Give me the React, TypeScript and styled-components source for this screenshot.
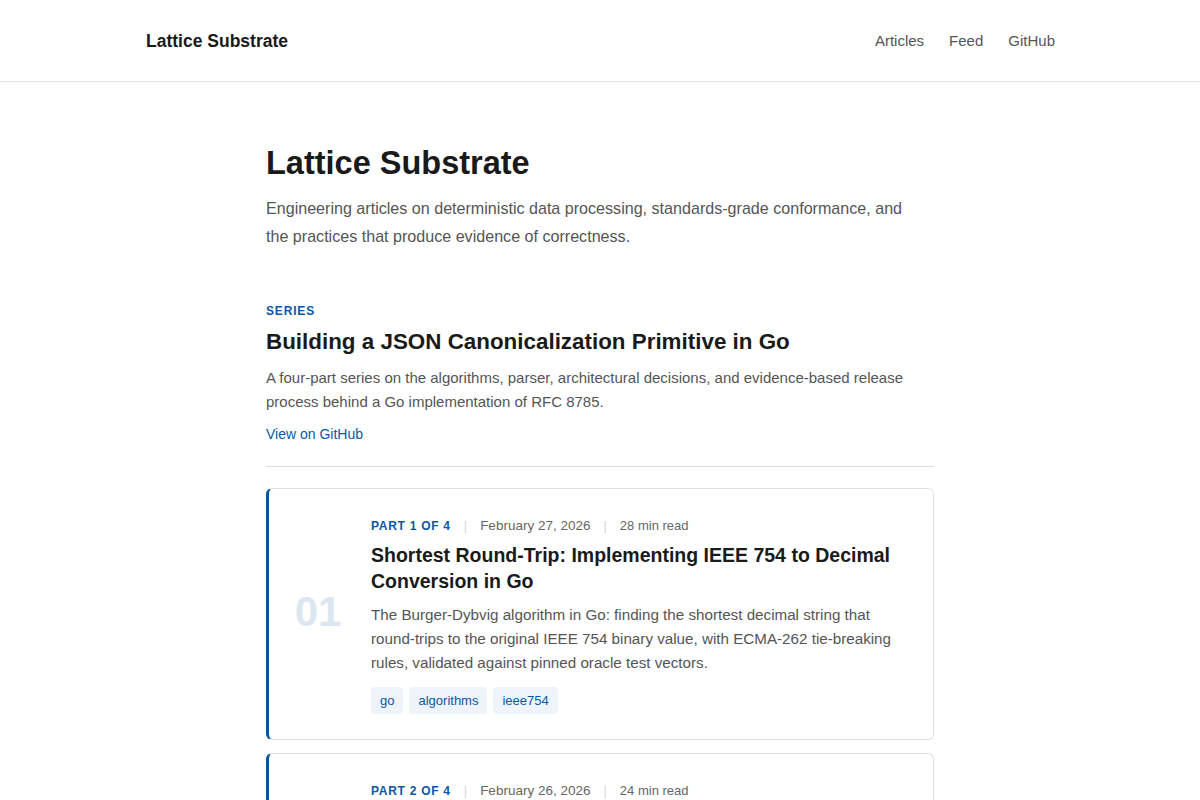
import styled, { createGlobalStyle } from "styled-components"

const GlobalStyle = createGlobalStyle`
  body {
    margin: 0;
    background: #ffffff;
    font-family: "Liberation Sans", Arial, sans-serif;
    color: #1a1a1a;
  }
  * {
    box-sizing: border-box;
  }
`

const Header = styled.header`
  border-bottom: 1px solid #e2e2e2;
`

const HeaderInner = styled.div`
  display: flex;
  align-items: center;
  justify-content: space-between;
  height: 81px;
  margin: 0 auto;
  padding: 0 145px 0 146px;
`

const Brand = styled.a`
  padding-top: 2px;
  font-size: 17.5px;
  font-weight: 700;
  color: #1a1a1a;
  text-decoration: none;
`

const Nav = styled.nav`
  display: flex;
  gap: 25px;
`

const NavLink = styled.a`
  font-size: 15px;
  color: #555555;
  text-decoration: none;
`

const Main = styled.main`
  width: 668px;
  margin: 0 auto;
  padding-top: 61px;
`

const Title = styled.h1`
  margin: 0;
  font-size: 32.5px;
  line-height: 40px;
  font-weight: 700;
  color: #1a1a1a;
`

const Lead = styled.p`
  max-width: 640px;
  margin: 11px 0 0;
  font-size: 16.1px;
  line-height: 28px;
  color: #555555;
`

const Series = styled.section`
  margin-top: 53px;
  padding-bottom: 22px;
  border-bottom: 1px solid #dddddd;
`

const Eyebrow = styled.div`
  font-size: 12px;
  line-height: 16px;
  font-weight: 700;
  letter-spacing: 0.07em;
  color: #0a58a5;
`

const SeriesTitle = styled.h2`
  margin: 8px 0 0;
  font-size: 22.4px;
  line-height: 30px;
  font-weight: 700;
  color: #1a1a1a;
`

const SeriesText = styled.p`
  margin: 9px 0 0;
  font-size: 15px;
  line-height: 24px;
  color: #555555;
`

const SeriesLink = styled.a`
  display: inline-block;
  margin-top: 10px;
  font-size: 14px;
  line-height: 20px;
  color: #0a58a5;
  text-decoration: none;
`

const List = styled.div`
  display: flex;
  flex-direction: column;
  gap: 13px;
  margin-top: 21px;
`

const Card = styled.article`
  display: flex;
  align-items: center;
  gap: 28px;
  padding: 28px 38px 25px 24px;
  border: 1px solid #e0e0e0;
  border-left: 3px solid #0b54a0;
  border-radius: 6px;
  background: #ffffff;
`

const PartNumber = styled.div`
  flex: 0 0 50px;
  padding-bottom: 8px;
  text-align: center;
  font-size: 42px;
  line-height: 1;
  font-weight: 700;
  color: #dce6f0;
`

const CardBody = styled.div`
  flex: 1;
  min-width: 0;
`

const Meta = styled.div`
  display: flex;
  align-items: center;
  gap: 13px;
  font-size: 13px;
  line-height: 18px;
  color: #666666;
`

const PartLabel = styled.span`
  font-size: 12px;
  font-weight: 700;
  letter-spacing: 0.06em;
  color: #0a58a5;
`

const Divider = styled.span`
  color: #d6d6d6;
`

const MetaDate = styled.span`
  font-size: 13.5px;
`

const CardTitle = styled.h3`
  margin: 7px 0 0;
  font-size: 19.5px;
  line-height: 26px;
  font-weight: 700;
  color: #1a1a1a;
`

const CardText = styled.p`
  margin: 9px 0 0;
  font-size: 15.2px;
  line-height: 24px;
  color: #555555;
`

const Tags = styled.div`
  display: flex;
  gap: 6px;
  margin-top: 12px;
`

const Tag = styled.span`
  display: inline-flex;
  align-items: center;
  height: 27px;
  padding: 0 9px;
  border-radius: 4px;
  background: #eef4fa;
  font-size: 13px;
  color: #0a58a5;
`

type Part = {
  n: number
  date: string
  read: string
  title: string
  text: string
  tags: string[]
}

const parts: Part[] = [
  {
    n: 1,
    date: "February 27, 2026",
    read: "28 min read",
    title: "Shortest Round-Trip: Implementing IEEE 754 to Decimal Conversion in Go",
    text: "The Burger-Dybvig algorithm in Go: finding the shortest decimal string that round-trips to the original IEEE 754 binary value, with ECMA-262 tie-breaking rules, validated against pinned oracle test vectors.",
    tags: ["go", "algorithms", "ieee754"],
  },
  {
    n: 2,
    date: "February 26, 2026",
    read: "24 min read",
    title: "A Strict JSON Parser for Canonical Input in Go",
    text: "Rejecting duplicate keys, lone surrogates and non-conforming numbers at the parser boundary, so that canonicalization only ever sees well-formed input.",
    tags: ["go", "parsing", "json"],
  },
]

export default function App() {
  return (
    <>
      <GlobalStyle />
      <Header>
        <HeaderInner>
          <Brand href="#">Lattice Substrate</Brand>
          <Nav>
            <NavLink href="#">Articles</NavLink>
            <NavLink href="#">Feed</NavLink>
            <NavLink href="#">GitHub</NavLink>
          </Nav>
        </HeaderInner>
      </Header>
      <Main>
        <Title>Lattice Substrate</Title>
        <Lead>
          Engineering articles on deterministic data processing, standards-grade conformance, and
          the practices that produce evidence of correctness.
        </Lead>
        <Series>
          <Eyebrow>SERIES</Eyebrow>
          <SeriesTitle>Building a JSON Canonicalization Primitive in Go</SeriesTitle>
          <SeriesText>
            A four-part series on the algorithms, parser, architectural decisions, and evidence-based release
            process behind a Go implementation of RFC 8785.
          </SeriesText>
          <SeriesLink href="#">View on GitHub</SeriesLink>
        </Series>
        <List>
          {parts.map((p) => (
            <Card key={p.n}>
              <PartNumber>{String(p.n).padStart(2, "0")}</PartNumber>
              <CardBody>
                <Meta>
                  <PartLabel>PART {p.n} OF 4</PartLabel>
                  <Divider>|</Divider>
                  <MetaDate>{p.date}</MetaDate>
                  <Divider>|</Divider>
                  <span>{p.read}</span>
                </Meta>
                <CardTitle>{p.title}</CardTitle>
                <CardText>{p.text}</CardText>
                <Tags>
                  {p.tags.map((t) => (
                    <Tag key={t}>{t}</Tag>
                  ))}
                </Tags>
              </CardBody>
            </Card>
          ))}
        </List>
      </Main>
    </>
  )
}
